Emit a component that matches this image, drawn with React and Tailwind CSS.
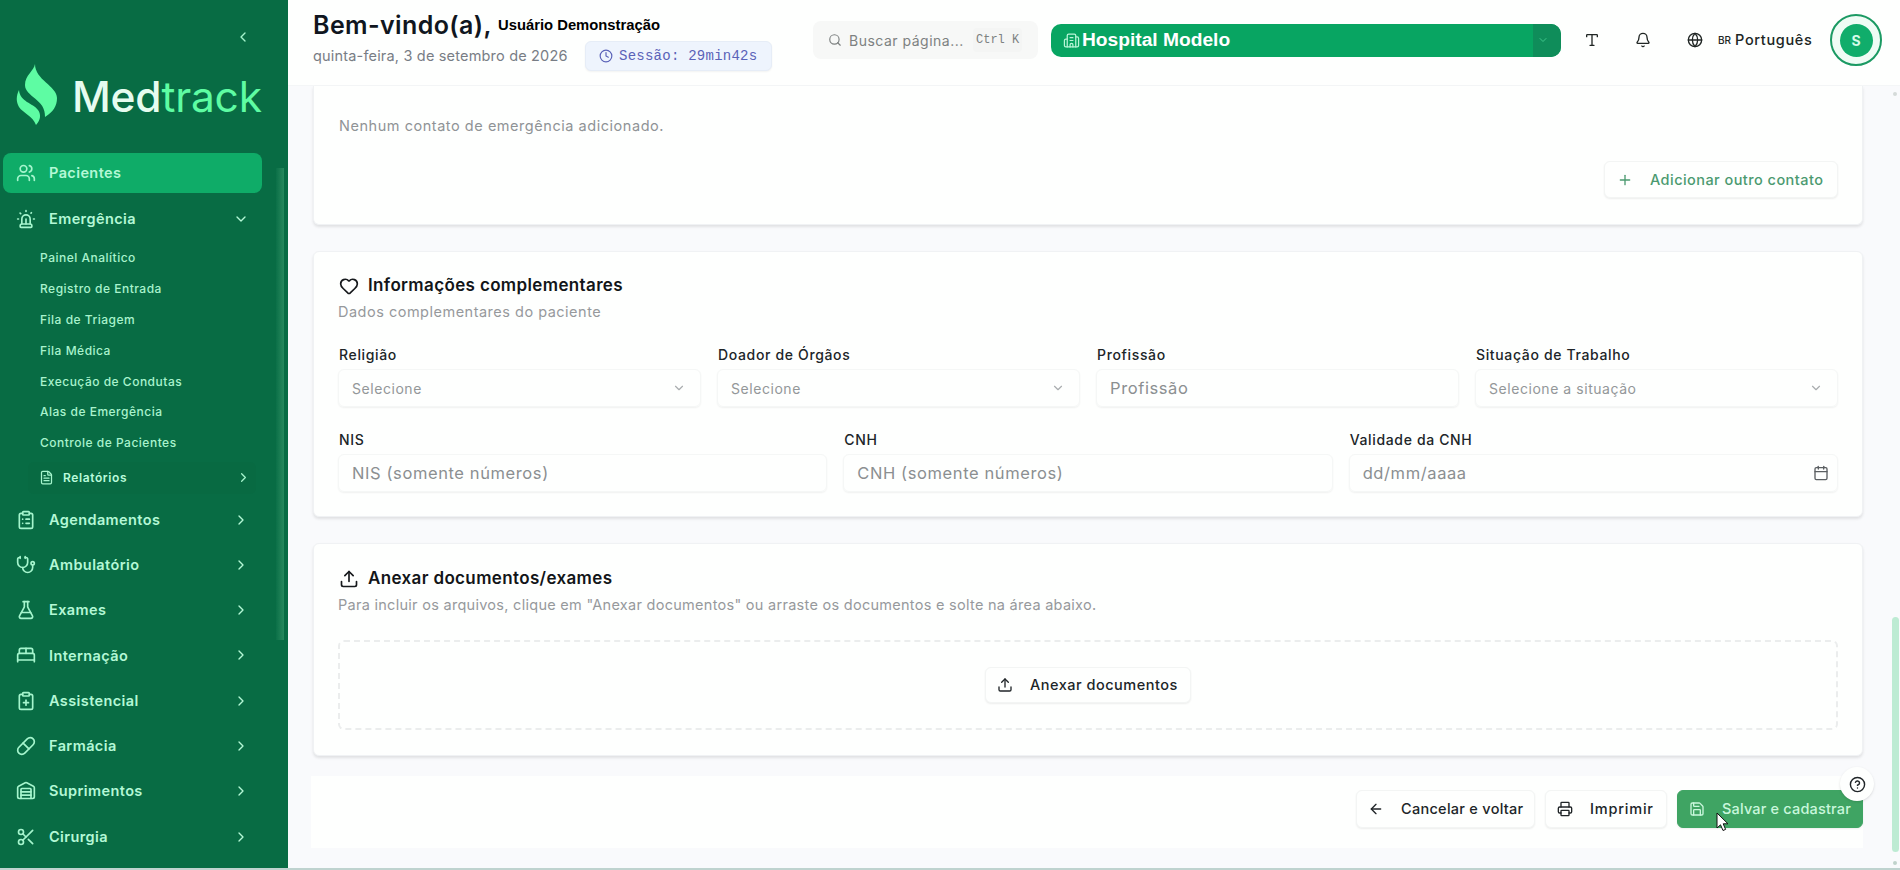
import React from 'react'
import {
  ArrowLeft,
  BedDouble,
  Bell,
  Building2,
  Calendar,
  ChevronDown,
  ChevronLeft,
  ChevronRight,
  CircleQuestionMark,
  ClipboardList,
  ClipboardPlus,
  Clock,
  FileText,
  FlaskConical,
  Globe,
  Heart,
  Pill,
  Plus,
  Printer,
  Save,
  Scissors,
  Search,
  Siren,
  Stethoscope,
  Type,
  Upload,
  Users,
  Warehouse,
} from 'lucide-react'

const emergencyLinks = [
  'Painel Analítico',
  'Registro de Entrada',
  'Fila de Triagem',
  'Fila Médica',
  'Execução de Condutas',
  'Alas de Emergência',
  'Controle de Pacientes',
]

const modules = [
  { label: 'Agendamentos', icon: ClipboardList },
  { label: 'Ambulatório', icon: Stethoscope },
  { label: 'Exames', icon: FlaskConical },
  { label: 'Internação', icon: BedDouble },
  { label: 'Assistencial', icon: ClipboardPlus },
  { label: 'Farmácia', icon: Pill },
  { label: 'Suprimentos', icon: Warehouse },
  { label: 'Cirurgia', icon: Scissors },
]

const Logo = () => (
  <div className="flex h-[62px] items-center pl-4">
    <svg width="42" height="62" viewBox="0 0 42 62" fill="#5efca3">
      <path d="M19 0C18 7 9 11 9 21C9 33 30 35 29 53C37 48 41 42 41 34C41 22 19 16 19 0Z" />
      <path d="M3 26C0 32 0 38 3 43C7 49 17 52 20 61C25 56 25 50 22 46C17 39 4 38 3 26Z" />
    </svg>
    <div className="mt-1 ml-[14px] text-[42.5px] leading-none font-medium tracking-[-0.2px] text-[#e6fcf0]">
      Med<span className="font-normal text-[#5efca3]">track</span>
    </div>
  </div>
)

const NavItem = ({ label, icon: Icon, open, active }) => (
  <div
    className={`ml-[3px] flex h-10 w-[259px] items-center rounded-lg pr-[13px] pl-[13px] ${
      active ? 'bg-[#0fac68]' : ''
    }`}
  >
    <Icon size={20} className="text-[#a5f5cd]" />
    <span className="ml-[13px] flex-1 text-[14.5px] font-semibold tracking-[0.4px] text-[#b4f8d6]">{label}</span>
    {!active && (open
      ? <ChevronDown size={16} className="text-[#b4f8d6]" />
      : <ChevronRight size={16} className="text-[#b4f8d6]" />)}
  </div>
)

const Sidebar = () => (
  <aside className="relative h-full w-[288px] shrink-0 overflow-hidden bg-[#086c44]">
    <div className="flex h-16 justify-end pt-[29px] pr-[37px]">
      <ChevronLeft size={16} className="text-[#a5f5cd]" />
    </div>
    <Logo />
    <nav className="pt-[27px]">
      <NavItem label="Pacientes" icon={Users} active />
      <div className="h-[6px]" />
      <NavItem label="Emergência" icon={Siren} open />
      <ul className="pt-1 pl-10">
        {emergencyLinks.map(link => (
          <li key={link} className="flex h-[30.8px] items-center text-[12px] font-medium tracking-[0.5px] text-[#a9f3cd]">
            {link}
          </li>
        ))}
      </ul>
      <div className="mt-[3px] ml-7 flex h-8 w-[228px] items-center rounded-md bg-[#086a42] pr-[5px] pl-[11px]">
        <FileText size={15} className="text-[#a5f5cd]" />
        <span className="ml-[9px] flex-1 text-[12px] font-semibold tracking-[0.6px] text-[#b9fbdb]">Relatórios</span>
        <ChevronRight size={15} className="text-[#a5f5cd]" />
      </div>
      <div className="flex flex-col gap-[5.3px] pt-[6px]">
        {modules.map(m => <NavItem key={m.label} label={m.label} icon={m.icon} />)}
      </div>
    </nav>
    <div className="absolute top-[168px] right-1 h-[472px] w-2 bg-gradient-to-r from-[#0a7048] to-[#26895d]" />
  </aside>
)

const Header = () => (
  <header className="flex h-[86px] shrink-0 border-b border-[#f4f6f7] bg-[#fefffe] pr-[18px] pl-[25px]">
    <div className="h-full w-[500px]">
      <div className="flex h-[42px] items-center pt-[8px]">
        <h1 className="w-[185px] text-[25px] leading-none font-semibold tracking-[0.4px] whitespace-nowrap text-[#101620]">
          Bem-vindo(a),
        </h1>
        <span className="font-['Liberation_Sans',Arial,sans-serif] text-[14.8px] font-bold text-black">
          Usuário Demonstração
        </span>
      </div>
      <div className="-mt-px flex items-center">
        <span className="w-[272px] text-[14.5px] tracking-[0.18px] whitespace-nowrap text-[#787d85]">quinta-feira, 3 de setembro de 2026</span>
        <div className="flex h-[30px] w-[187px] items-center rounded-md border border-[#e6edf7] bg-[#eef4fd] pl-[13px] text-[#5a62b8] shadow-xs">
          <Clock size={14} />
          <span className="ml-[6px] font-['Liberation_Mono','Courier_New',monospace] text-[14px] tracking-[0.25px]">
            Sessão: 29min42s
          </span>
        </div>
      </div>
    </div>
    <div className="flex h-20 flex-1 items-center">
      <div className="flex h-[38px] w-[225px] items-center rounded-lg bg-[#f7f8f7] pl-[15px] text-[#7d8181]">
        <Search size={14} />
        <span className="ml-[7px] w-[118px] text-[14px] tracking-[0.5px] whitespace-nowrap">Buscar página...</span>
        <kbd className="ml-[6px] flex h-6 items-center rounded bg-[#f4f5f4] px-[3px] font-['Liberation_Mono','Courier_New',monospace] text-[12px]">
          Ctrl K
        </kbd>
      </div>
      <div className="ml-[13px] flex h-[33px] w-[510px] items-center overflow-hidden rounded-[10px] bg-[#08a562] pl-3 text-white">
        <Building2 size={17} strokeWidth={1.75} className="text-[#b9f5d7]" />
        <span className="ml-[2px] flex-1 font-['Liberation_Sans',Arial,sans-serif] text-[19.2px] font-bold">Hospital Modelo</span>
        <div className="flex h-full w-7 items-center bg-[#0f8d5a] pl-1">
          <ChevronDown size={12} className="text-[#3fc78b]" />
        </div>
      </div>
      <Type size={16} className="ml-[23px] text-[#202624]" />
      <Bell size={16} className="ml-[35px] text-[#202624]" />
      <Globe size={16} className="ml-[36px] text-[#202624]" />
      <span className="ml-[15px] text-[10px] font-medium text-[#202624]">BR</span>
      <span className="ml-[4px] w-[78px] text-[14.5px] font-medium tracking-[0.65px] text-[#202624]">Português</span>
      <div className="ml-auto flex size-[52px] items-center justify-center rounded-full border-2 border-[#1b9a63] bg-[#effcf5]">
        <div className="flex size-[33px] items-center justify-center rounded-full bg-[#10ad6b] text-[14px] font-bold text-[#d6fbe9]">
          S
        </div>
      </div>
    </div>
  </header>
)

const Card = ({ className = '', children }) => (
  <section className={`rounded-md border border-[#f0f2f4] bg-[#fefffe] px-6 shadow-[0_2px_3px_rgba(0,0,0,0.10)] ${className}`}>
    {children}
  </section>
)

const CardTitle = ({ icon: Icon, title, subtitle, subtitleClass = '' }) => (
  <div>
    <div className="flex h-6 items-center pl-px">
      <Icon size={20} className="text-[#16191c]" />
      <h2 className="ml-[9px] text-[17px] font-semibold tracking-[0.36px] text-[#121518]">{title}</h2>
    </div>
    <p className={`mt-[3px] text-[14.5px] leading-[22px] text-[#96999c] ${subtitleClass}`}>{subtitle}</p>
  </div>
)

const Field = ({ label, children }) => (
  <div>
    <label className="block h-[22px] pl-px text-[14px] leading-[14px] font-medium tracking-[0.65px] text-[#202528]">{label}</label>
    <div className="-mt-px flex h-[38px] items-center justify-between rounded-md border border-[#f5f7f6] pr-3 pl-[13px] shadow-[0_1px_2px_rgba(0,0,0,0.06)]">
      {children}
    </div>
  </div>
)

const SelectField = ({ label, placeholder }) => (
  <Field label={label}>
    <span className="text-[14px] tracking-[0.55px] text-[#939799]">{placeholder}</span>
    <ChevronDown size={14} className="mr-[2px] text-[#a9adaf]" />
  </Field>
)

const TextField = ({ label, placeholder, icon: Icon }) => (
  <Field label={label}>
    <span className="text-[16.5px] tracking-[0.6px] text-[#8b8f91]">{placeholder}</span>
    {Icon && <Icon size={16} className="-mr-[4px] text-[#5b5f62]" />}
  </Field>
)

const Button = ({ icon: Icon, label, className = '' }) => (
  <button
    className={`flex items-center rounded-md border pl-[11px] text-[14.5px] font-medium whitespace-nowrap shadow-[0_1px_2px_rgba(0,0,0,0.07)] ${className}`}
  >
    <Icon size={16} />
    <span className="ml-[17px]">{label}</span>
  </button>
)

const App = () => {
  return (
    <div className="relative flex h-[870px] w-[1900px] overflow-hidden border-b-2 border-[#bfd3cf] bg-[#f9fafc] font-[Inter,sans-serif]">
      <Sidebar />
      <div className="flex min-w-0 flex-1 flex-col">
        <Header />
        <main className="relative flex-1 pr-[37px] pl-[25px]">
          {/* Contatos de emergência */}
          <Card className="h-[139px] rounded-t-none border-t-0 pt-[29px]">
            <p className="pl-px text-[14.5px] leading-[22px] tracking-[0.54px] text-[#8f9396]">Nenhum contato de emergência adicionado.</p>
            <div className="flex justify-end pt-[24px]">
              <Button icon={Plus} label="Adicionar outro contato" className="h-[37px] w-[234px] border-[#f3f5f4] bg-[#fefffe] pl-[12px] tracking-[0.45px] text-[#4b9a70]" />
            </div>
          </Card>

          <Card className="mt-[26px] h-[266px] pt-[22px]">
            <CardTitle
              icon={Heart}
              title="Informações complementares"
              subtitle="Dados complementares do paciente"
              subtitleClass="tracking-[0.5px]"
            />
            <div className="grid grid-cols-4 gap-4 pt-[25px]">
              <SelectField label="Religião" placeholder="Selecione" />
              <SelectField label="Doador de Órgãos" placeholder="Selecione" />
              <TextField label="Profissão" placeholder="Profissão" />
              <SelectField label="Situação de Trabalho" placeholder="Selecione a situação" />
            </div>
            <div className="grid grid-cols-3 gap-4 pt-[26px]">
              <TextField label="NIS" placeholder="NIS (somente números)" />
              <TextField label="CNH" placeholder="CNH (somente números)" />
              <TextField label="Validade da CNH" placeholder="dd/mm/aaaa" icon={Calendar} />
            </div>
          </Card>

          <Card className="mt-[26px] h-[213px] pt-[23px]">
            <CardTitle
              icon={Upload}
              title="Anexar documentos/exames"
              subtitle={'Para incluir os arquivos, clique em "Anexar documentos" ou arraste os documentos e solte na área abaixo.'}
              subtitleClass="tracking-[0.28px]"
            />
            <div className="mt-[24px] flex h-[90px] items-center justify-center rounded-md border-2 border-dashed border-[#ebeded]">
              <Button icon={Upload} label="Anexar documentos" className="h-[36px] w-[206px] border-[#f3f5f4] bg-[#fefffe] tracking-[0.5px] text-[#202528]" />
            </div>
          </Card>

          <div className="mt-[20px] -ml-[2px] flex h-[72px] justify-end gap-[10px] bg-[#fefffe] pt-[14px]">
            <Button icon={ArrowLeft} label="Cancelar e voltar" className="h-[38px] w-[179px] border-[#f3f5f4] bg-[#fefffe] tracking-[0.28px] text-[#202528]" />
            <Button icon={Printer} label="Imprimir" className="h-[38px] w-[122px] border-[#f3f5f4] bg-[#fefffe] tracking-[0.8px] text-[#202528]" />
            <Button icon={Save} label="Salvar e cadastrar" className="h-[38px] w-[186px] border-[#3fa463] bg-[#3fa463] tracking-[0.18px] text-[#c9f7dc]" />
          </div>

          {/* Ajuda flutuante */}
          <div className="absolute top-[681px] right-[26px] flex size-[34px] items-center justify-center rounded-full bg-[#fefffe] shadow-sm">
            <CircleQuestionMark size={17} className="text-[#202528]" />
          </div>
        </main>
      </div>

      {/* Barra de rolagem */}
      <div className="absolute top-[617px] right-px h-[235px] w-[7px] rounded-full bg-[#bdebd3]" />
      <div className="absolute top-[92px] right-[3px] size-[4px] rounded-full bg-[#d5dad9]" />
      <div className="absolute top-[861px] right-[3px] size-[4px] rounded-full bg-[#c0d2cb]" />

      <svg className="absolute top-[812px] left-[1716px]" width="14" height="20" viewBox="0 0 14 20">
        <path d="M1 1V16L4.5 12.8L7 18.5L9.6 17.4L7.2 11.8H12Z" fill="#fff" stroke="#111" strokeWidth="1" />
      </svg>
    </div>
  )
}

export default App
